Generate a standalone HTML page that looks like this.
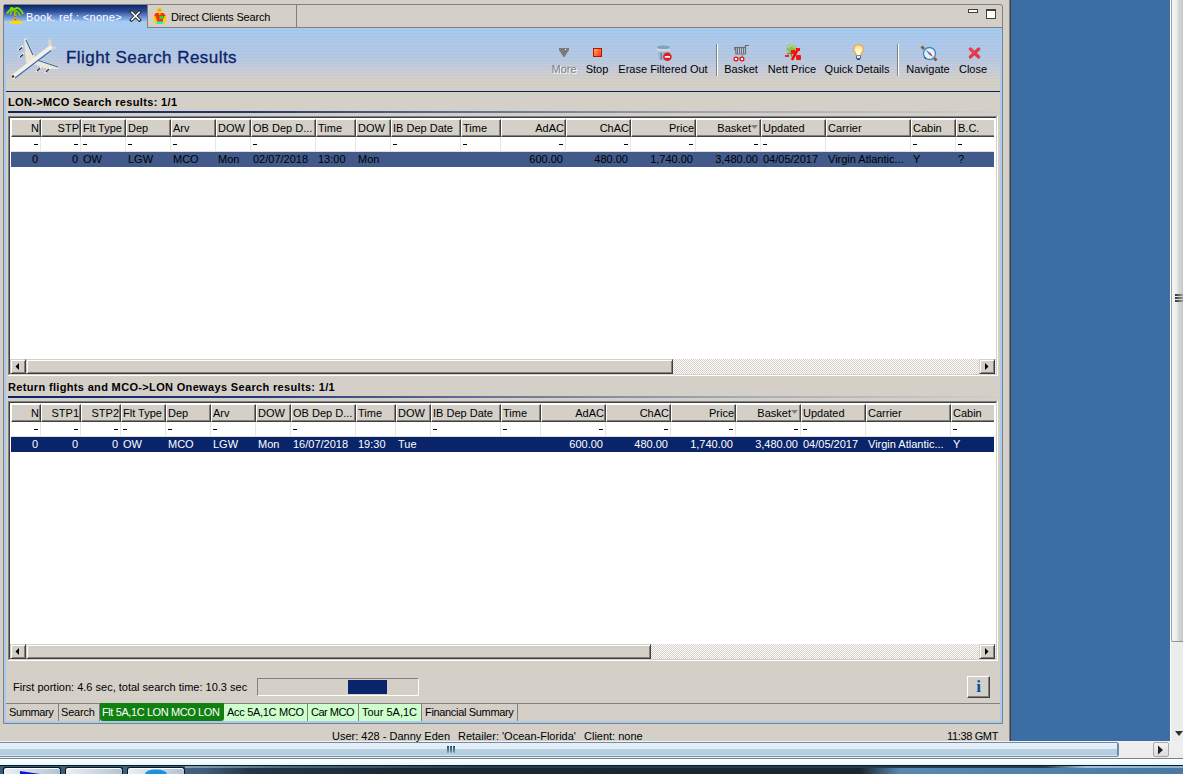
<!DOCTYPE html><html><head><meta charset="utf-8"><style>
html,body{margin:0;padding:0;}
body{width:1183px;height:774px;overflow:hidden;position:relative;background:#d4d0c8;font-family:"Liberation Sans",sans-serif;font-size:11px;color:#000;}
div{position:absolute;box-sizing:border-box;}
.t{white-space:nowrap;line-height:13px;height:13px;}
.r{text-align:right;}
svg{position:absolute;}
</style></head><body>
<div style="left:1009px;top:0px;width:1px;height:741px;background:#808080"></div>
<div style="left:1010px;top:0px;width:1px;height:741px;background:#404040"></div>
<div style="left:1011px;top:0px;width:159px;height:741px;background:#3a6ea5"></div>
<div style="left:1170px;top:0px;width:13px;height:741px;background:linear-gradient(to right,#ffffff 0,#ffffff 1px,#ececec 1px)"></div>
<div style="left:1171px;top:0px;width:12px;height:642px;background:linear-gradient(to right,#a0a0a0 0,#a0a0a0 1px,#f6f6f6 1px,#ececec 6px,#dadade 7px,#c8c8cc 12px);border-bottom:1px solid #909090;border-bottom-left-radius:2px"></div>
<div style="left:1175px;top:294px;width:8px;height:2px;background:linear-gradient(to right,#303030,#a0a0a0)"></div>
<div style="left:1175px;top:297px;width:8px;height:2px;background:linear-gradient(to right,#303030,#a0a0a0)"></div>
<div style="left:1175px;top:300px;width:8px;height:2px;background:linear-gradient(to right,#303030,#a0a0a0)"></div>
<svg style="left:1175px;top:729px" width="8" height="8"><path d="M0 2 L8 2 L4 7 Z" fill="#303030"/></svg>
<div style="left:0px;top:741px;width:1170px;height:18px;background:linear-gradient(#f2f2f2 0px,#f2f2f2 1px,#6a8cb0 1px,#6a8cb0 2px,#e6f0f6 2px,#e2ecf2 8px,#b8d2e4 8px,#b0cce0 14px,#dce6ea 14px,#dce6ea 15px,#6a8cb0 15px,#6a8cb0 16px,#f0f4f6 16px,#f0f4f6 17px,#808080 17px,#808080 18px)"></div>
<div style="left:1117px;top:741px;width:66px;height:18px;background:linear-gradient(#f0f0f0 0,#ececec 17px,#808080 17px)"></div>
<div style="left:1116px;top:742px;width:3px;height:15px;background:#6a8cb0;border-radius:0 3px 3px 0"></div>
<div style="left:1113px;top:743px;width:4px;height:13px;background:linear-gradient(#e6f0f6 0,#e2ecf2 6px,#b8d2e4 6px,#b0cce0 12px,#dce6ea 12px)"></div>
<div style="left:1153px;top:742px;width:16px;height:15px;background:linear-gradient(#f4f4f4,#dcdcdc);border:1px solid #a8a8a8;border-radius:2px"></div>
<svg style="left:1157px;top:745px" width="8" height="10"><path d="M1 0.5 L6 5 L1 9.5 Z" fill="#202020"/></svg>
<div style="left:447px;top:746px;width:2px;height:7px;background:linear-gradient(#2a4a60,#7aa0b8);border-radius:0 0 1px 1px"></div>
<div style="left:450px;top:746px;width:2px;height:7px;background:linear-gradient(#2a4a60,#7aa0b8);border-radius:0 0 1px 1px"></div>
<div style="left:453px;top:746px;width:2px;height:7px;background:linear-gradient(#2a4a60,#7aa0b8);border-radius:0 0 1px 1px"></div>
<div style="left:0px;top:759px;width:1183px;height:6px;background:linear-gradient(#ffffff,#e0faff)"></div>
<div style="left:0px;top:765px;width:1183px;height:9px;background:linear-gradient(to right,#3a5a78 0,#42607e 200px,#22364a 250px,#1a2834 400px,#1a2630 860px,#5a88b4 900px,#4a78a4 1183px)"></div>
<div style="left:0px;top:765px;width:1183px;height:1px;background:#101820"></div>
<div style="left:185px;top:766px;width:998px;height:2px;background:linear-gradient(to right,#8aa0b4,#50687c 100px,#2a3a48 300px,#2a3a48 860px,#a0c0dc 900px,#90b0cc)"></div>
<div style="left:3px;top:767px;width:58px;height:7px;background:linear-gradient(to right,#eaf0f6,#b0c4d6);border:1px solid #0c1620;border-bottom:none;border-radius:3px 3px 0 0;box-shadow:inset 0 1px 0 #fff"></div>
<div style="left:65px;top:767px;width:58px;height:7px;background:linear-gradient(to right,#eaf0f6,#b0c4d6);border:1px solid #0c1620;border-bottom:none;border-radius:3px 3px 0 0;box-shadow:inset 0 1px 0 #fff"></div>
<div style="left:127px;top:767px;width:58px;height:7px;background:linear-gradient(to right,#eaf0f6,#b0c4d6);border:1px solid #0c1620;border-bottom:none;border-radius:3px 3px 0 0;box-shadow:inset 0 1px 0 #fff"></div>
<svg style="left:20px;top:771px" width="20" height="3"><path d="M0 0 L20 3 L0 3 Z" fill="#1010e0"/></svg>
<svg style="left:145px;top:769px" width="22" height="5"><ellipse cx="11" cy="5" rx="11" ry="4.5" fill="#2090e0"/></svg>
<div style="left:3px;top:4px;width:1000px;height:720px;border:1px solid #808080;border-top-right-radius:3px;border-top-left-radius:2px;background:#d4d0c8"></div>
<div style="left:4px;top:21px;width:2px;height:702px;background:#a6caf0"></div>
<div style="left:1000px;top:28px;width:2px;height:695px;background:#a6caf0"></div>
<div style="left:4px;top:721px;width:998px;height:2px;background:#a6caf0"></div>
<div style="left:4px;top:5px;width:143px;height:23px;background:linear-gradient(#0a246a 0px,#2a4a94 6px,#6a90d4 12px,#98bef0 16px,#a6caf0 16px)"></div>
<div style="left:147px;top:5px;width:150px;height:23px;border-left:1px solid #808080;border-right:1px solid #808080;border-bottom:1px solid #808080;background:#d4d0c8"></div>
<div style="left:296px;top:27px;width:706px;height:1px;background:#808080"></div>
<div style="left:968px;top:9px;width:10px;height:4px;border:1px solid #404040;background:#fff"></div>
<div style="left:986px;top:9px;width:10px;height:10px;border:1px solid #404040;border-top-width:2px;background:#fff"></div>
<div class="t" style="left:26px;top:11px;color:#fff;letter-spacing:0.3px">Book. ref.: &lt;none&gt;</div>
<div class="t" style="left:171px;top:11px;letter-spacing:-0.2px">Direct Clients Search</div>
<svg style="left:129px;top:10px" width="13" height="12" viewBox="0 0 13 12"><path d="M2.5 2 L10.5 10 M10.5 2 L2.5 10" stroke="#303030" stroke-width="3.4" stroke-linecap="square"/><path d="M2.8 2.3 L10.2 9.7 M10.2 2.3 L2.8 9.7" stroke="#fff" stroke-width="1.5" stroke-linecap="square"/></svg>
<svg style="left:4px;top:5px" width="24" height="22" viewBox="0 0 24 22">
<path d="M5 17 L9 15.5 L15 15.5 L19 17 L19 18 L15 19 L9 19 L5 18 Z" fill="#ffd800"/>
<path d="M10.5 6 L11.5 11 L11.5 16" stroke="#e8a020" stroke-width="2" fill="none"/>
<path d="M11 11 L12 12 M11 14 L12 15" stroke="#a05010" stroke-width="1"/>
<path d="M10.5 4.5 C8 3 5 5 3 8.5" stroke="#80e000" stroke-width="1.8" fill="none"/>
<path d="M10.5 4.5 C9 5 6.5 7 6.5 10" stroke="#70d000" stroke-width="1.6" fill="none"/>
<path d="M10.5 4.5 C9 2.5 7.5 2.5 6 3.5" stroke="#80e000" stroke-width="1.6" fill="none"/>
<path d="M10.5 4.5 C12 2.5 14 2.5 16 4.5 C17.5 5.5 18.5 7 19 9" stroke="#80e000" stroke-width="1.8" fill="none"/>
<path d="M11 5 C13 6 15.5 8 16 11" stroke="#70d000" stroke-width="1.6" fill="none"/>
<path d="M11 5 C11.5 7 12 9 12 10" stroke="#60c000" stroke-width="1.4" fill="none"/>
</svg>
<svg style="left:148px;top:5px" width="24" height="22" viewBox="0 0 24 22">
<ellipse cx="11.5" cy="5" rx="2.6" ry="2.2" fill="#f8c000"/>
<rect x="10.5" y="4.5" width="2" height="1" fill="#ff7000"/>
<path d="M7.5 8 L15.5 8 L18 11 L18 13 L15 14 L15 19 L8.5 19 L8.5 14 L6 13 L6 11 Z" fill="#ff3000"/>
<rect x="11.5" y="11" width="4" height="3" fill="#20e020"/>
<rect x="9" y="16.5" width="6" height="2.5" fill="#10f0f0"/>
<path d="M6.5 12 L8 17.5 M17.5 12 L16 17.5" stroke="#ffd000" stroke-width="2.4" stroke-linecap="round"/>
<rect x="11" y="8" width="1.5" height="2" fill="#ffd000"/>
</svg>
<div style="left:6px;top:28px;width:994px;height:63px;background:linear-gradient(#a6caf0 0px,#b4c8e4 28px,#c8ccd8 42px,#d4d0c8 52px,#d4d0c8 63px)"></div>
<div style="left:6px;top:28px;width:994px;height:63px;background:repeating-linear-gradient(rgba(255,255,255,0) 0px,rgba(255,255,255,0) 2px,rgba(0,0,0,0.025) 2px,rgba(0,0,0,0.025) 3px)"></div>
<div style="left:6px;top:91px;width:994px;height:1px;background:#0a246a"></div>
<div class="t" style="left:66px;top:48px;font-size:17px;line-height:20px;height:20px;color:#0a246a;letter-spacing:0.45px;-webkit-text-stroke:0.3px #0a246a">Flight Search Results</div>
<div class="t" style="left:504px;top:63px;width:120px;text-align:center;color:#808080;text-shadow:1px 1px 0 #fff">More</div>
<div class="t" style="left:537px;top:63px;width:120px;text-align:center;">Stop</div>
<div class="t" style="left:603px;top:63px;width:120px;text-align:center;">Erase Filtered Out</div>
<div class="t" style="left:681px;top:63px;width:120px;text-align:center;">Basket</div>
<div class="t" style="left:732px;top:63px;width:120px;text-align:center;">Nett Price</div>
<div class="t" style="left:797px;top:63px;width:120px;text-align:center;">Quick Details</div>
<div class="t" style="left:868px;top:63px;width:120px;text-align:center;">Navigate</div>
<div class="t" style="left:913px;top:63px;width:120px;text-align:center;">Close</div>
<div style="left:716px;top:44px;width:1px;height:32px;background:#808080"></div>
<div style="left:717px;top:44px;width:1px;height:32px;background:#ffffff"></div>
<div style="left:897px;top:44px;width:1px;height:32px;background:#808080"></div>
<div style="left:898px;top:44px;width:1px;height:32px;background:#ffffff"></div>
<svg style="left:559px;top:48px" width="11" height="9"><path d="M0 0 L10 0 L10 2 L5.5 9 L4.5 9 L0 2 Z" fill="#7a7a7a"/><rect x="6" y="1" width="1" height="1" fill="#fff"/></svg>
<svg style="left:593px;top:48px" width="9" height="9"><defs><linearGradient id="gs" x1="0" y1="0" x2="1" y2="1"><stop offset="0" stop-color="#ffb070"/><stop offset="1" stop-color="#ff3000"/></linearGradient></defs><rect x="0.5" y="0.5" width="8" height="8" fill="url(#gs)" stroke="#c01000"/></svg>
<svg style="left:656px;top:45px" width="17" height="17" viewBox="0 0 17 17">
<path d="M1 2.5 L14 2.5 L13.5 8 L13 15 L3 15 L2 8 Z" fill="#9cb8cc"/>
<rect x="1" y="3.5" width="13" height="3" fill="#c8d8e4"/>
<ellipse cx="7.5" cy="2.3" rx="6.5" ry="1.8" fill="#7ea4c0"/>
<rect x="4.5" y="8" width="1.5" height="6.5" fill="#5a88ac"/>
<circle cx="11.4" cy="11.8" r="4.3" fill="#e02020"/>
<rect x="8.8" y="11" width="5.2" height="1.7" fill="#fff"/>
</svg>
<svg style="left:728px;top:40px" width="24" height="24" viewBox="0 0 24 24">
<path d="M6 7.5 L17 7.5" stroke="#6e6e6e" stroke-width="1.2"/>
<path d="M17.5 14 L17.5 5.5 L21 5.5" stroke="#6e6e6e" stroke-width="1.2" fill="none"/>
<path d="M7.5 7 L8 14 L17.5 14" stroke="#6e6e6e" stroke-width="1.2" fill="none"/>
<path d="M9.5 8 L9.5 13.5 M11.5 8 L11.5 13.5 M13.5 8 L13.5 13.5 M15.5 8 L15.5 13.5" stroke="#6e6e6e" stroke-width="1"/>
<path d="M6.5 8.5 L6.5 10" stroke="#6e6e6e" stroke-width="1"/>
<path d="M15 14 L14 17 L9 18.5" stroke="#50a0a0" stroke-width="1" fill="none"/>
<circle cx="8" cy="19" r="1.9" fill="#fff" stroke="#ff0000" stroke-width="1.2"/>
<circle cx="14" cy="19" r="1.9" fill="#fff" stroke="#ff0000" stroke-width="1.2"/>
</svg>
<svg style="left:784px;top:44px" width="18" height="17" viewBox="0 0 18 17">
<ellipse cx="7.5" cy="4.5" rx="5" ry="4" fill="#8cc050"/>
<path d="M4 4 C5 1 10 1 11 4" stroke="#c8e0a0" stroke-width="1.2" fill="none"/>
<path d="M3 10 L7 9 L8 13" stroke="#60a030" stroke-width="1.6" fill="none"/>
<rect x="1" y="11" width="4" height="2" fill="#ff2020"/>
<path d="M8 16 L14 5" stroke="#ff0000" stroke-width="2.6"/>
<rect x="7" y="6" width="4" height="4" fill="#ff1010"/>
<rect x="12" y="11" width="5" height="5" rx="1" fill="#ff1010"/>
<rect x="12" y="4" width="4" height="3" fill="#ff1010"/>
</svg>
<svg style="left:852px;top:44px" width="13" height="17" viewBox="0 0 13 17">
<defs><radialGradient id="gb" cx="0.5" cy="0.75" r="0.7"><stop offset="0" stop-color="#ffffff"/><stop offset="0.5" stop-color="#fff4c8"/><stop offset="1" stop-color="#ffd890"/></radialGradient></defs>
<path d="M6.5 0.8 C9.5 0.8 11.2 3 11.2 5.5 C11.2 7.5 9.8 8.5 9 10 L9 11.5 L4 11.5 L4 10 C3.2 8.5 1.8 7.5 1.8 5.5 C1.8 3 3.5 0.8 6.5 0.8 Z" fill="url(#gb)" stroke="#f4a820" stroke-width="1.1"/>
<rect x="4" y="11.5" width="5" height="3.5" fill="#4a6a98"/>
<rect x="5" y="12" width="3" height="2" fill="#e8eef4"/>
<rect x="5" y="15" width="3" height="1" fill="#3a4a68"/>
</svg>
<svg style="left:920px;top:44px" width="18" height="18" viewBox="0 0 18 18">
<path d="M1.5 2.5 L4 5 M14 14 L16.5 16.5" stroke="#8a5a20" stroke-width="2.6"/>
<circle cx="9.5" cy="9.5" r="6" fill="#e8f0f8" stroke="#3a8cc8" stroke-width="1.4"/>
<path d="M5.5 5.5 L10.5 9 L9 10.5 Z" fill="#2a88e0"/>
<path d="M10.5 9 L13 13 L9 10.5 Z" fill="#ff1818"/>
<path d="M4 13 L6 15" stroke="#303848" stroke-width="1"/>
</svg>
<svg style="left:967px;top:46px" width="15" height="14" viewBox="0 0 15 14">
<path d="M3.3 3 L11.7 11 M11.7 3 L3.3 11" stroke="#e43848" stroke-width="3.2" stroke-linecap="round"/>
<path d="M3.5 3.3 L7.5 7" stroke="#ff7080" stroke-width="1" opacity="0.6"/>
</svg>
<svg style="left:10px;top:36px" width="52" height="44" viewBox="0 0 52 44">
<path d="M14 3 L16 2 L24 18 L25 23 L16 27 Z" fill="#ece6d6"/>
<path d="M16 4 L23 19" stroke="#3a6ab0" stroke-width="1.2"/>
<path d="M20 27 L27 23 L48 30 L49 33 L38 33 Z" fill="#ece6d6"/>
<path d="M27 24 L48 31" stroke="#3a6ab0" stroke-width="1.3"/>
<path d="M38 4 L41 3 L42 10 L46 11 L47 13 L39 12 Z" fill="#ddd6c4"/>
<path d="M3.5 40.5 L40 12" stroke="#f4f0e6" stroke-width="4.5" stroke-linecap="round"/>
<path d="M5 42 L41 14.5" stroke="#3a6ab0" stroke-width="1.1"/>
<path d="M2 41 L4 40" stroke="#303030" stroke-width="2"/>
<path d="M8 14 L13 10 M9 21 L14 17 M26 36 L31 31 M35 37 L40 32" stroke="#ffffff" stroke-width="1.6"/>
<path d="M9 14 L12 11.5 M10 21 L13 18.5 M27 35 L30 32 M36 36 L39 33" stroke="#303030" stroke-width="1.3"/>
</svg>
<div class="t" style="left:8px;top:96px;font-weight:bold;letter-spacing:0.34px">LON-&gt;MCO Search results: 1/1</div>
<div style="left:8px;top:111px;width:992px;height:2px;background:linear-gradient(to right,#0a246a 0,#203a78 25%,#6a7898 50%,#a8acb8 75%,#d0cec8 100%)"></div>
<div class="t" style="left:8px;top:381px;font-weight:bold;letter-spacing:0.34px">Return flights and MCO-&gt;LON Oneways Search results: 1/1</div>
<div style="left:8px;top:396px;width:992px;height:2px;background:linear-gradient(to right,#0a246a 0,#203a78 25%,#6a7898 50%,#a8acb8 75%,#d0cec8 100%)"></div>
<div style="left:8px;top:116px;width:990px;height:1px;background:#808080"></div>
<div style="left:8px;top:116px;width:1px;height:260px;background:#808080"></div>
<div style="left:9px;top:117px;width:988px;height:1px;background:#404040"></div>
<div style="left:9px;top:117px;width:1px;height:258px;background:#404040"></div>
<div style="left:997px;top:116px;width:1px;height:260px;background:#ffffff"></div>
<div style="left:8px;top:375px;width:990px;height:1px;background:#ffffff"></div>
<div style="left:996px;top:117px;width:1px;height:258px;background:#d4d0c8"></div>
<div style="left:9px;top:374px;width:988px;height:1px;background:#d4d0c8"></div>
<div style="left:10px;top:118px;width:986px;height:256px;background:#ffffff"></div>
<div style="left:11px;top:119px;width:983px;height:48px;overflow:hidden">
<div style="left:0px;top:0px;width:30px;height:18px;background:#d4d0c8;border-top:1px solid #fff;border-left:1px solid #fff;border-right:1px solid #404040;border-bottom:1px solid #404040;box-shadow:inset -1px -1px 0 #808080"></div>
<div class="t" style="left:0px;top:3px;width:30px;height:13px;overflow:hidden"><div class="t" style="top:0;right:2px;text-align:right">N</div></div>
<div style="left:29px;top:18px;width:1px;height:15px;background:#e8e6e0"></div>
<div style="left:23px;top:25px;width:4px;height:1px;background:#000"></div>
<div style="left:30px;top:0px;width:40px;height:18px;background:#d4d0c8;border-top:1px solid #fff;border-left:1px solid #fff;border-right:1px solid #404040;border-bottom:1px solid #404040;box-shadow:inset -1px -1px 0 #808080"></div>
<div class="t" style="left:30px;top:3px;width:40px;height:13px;overflow:hidden"><div class="t" style="top:0;right:2px;text-align:right">STP</div></div>
<div style="left:69px;top:18px;width:1px;height:15px;background:#e8e6e0"></div>
<div style="left:63px;top:25px;width:4px;height:1px;background:#000"></div>
<div style="left:70px;top:0px;width:45px;height:18px;background:#d4d0c8;border-top:1px solid #fff;border-left:1px solid #fff;border-right:1px solid #404040;border-bottom:1px solid #404040;box-shadow:inset -1px -1px 0 #808080"></div>
<div class="t" style="left:70px;top:3px;width:45px;height:13px;overflow:hidden"><div class="t" style="top:0;left:2px">Flt Type</div></div>
<div style="left:114px;top:18px;width:1px;height:15px;background:#e8e6e0"></div>
<div style="left:72px;top:25px;width:4px;height:1px;background:#000"></div>
<div style="left:115px;top:0px;width:45px;height:18px;background:#d4d0c8;border-top:1px solid #fff;border-left:1px solid #fff;border-right:1px solid #404040;border-bottom:1px solid #404040;box-shadow:inset -1px -1px 0 #808080"></div>
<div class="t" style="left:115px;top:3px;width:45px;height:13px;overflow:hidden"><div class="t" style="top:0;left:2px">Dep</div></div>
<div style="left:159px;top:18px;width:1px;height:15px;background:#e8e6e0"></div>
<div style="left:117px;top:25px;width:4px;height:1px;background:#000"></div>
<div style="left:160px;top:0px;width:45px;height:18px;background:#d4d0c8;border-top:1px solid #fff;border-left:1px solid #fff;border-right:1px solid #404040;border-bottom:1px solid #404040;box-shadow:inset -1px -1px 0 #808080"></div>
<div class="t" style="left:160px;top:3px;width:45px;height:13px;overflow:hidden"><div class="t" style="top:0;left:2px">Arv</div></div>
<div style="left:204px;top:18px;width:1px;height:15px;background:#e8e6e0"></div>
<div style="left:162px;top:25px;width:4px;height:1px;background:#000"></div>
<div style="left:205px;top:0px;width:35px;height:18px;background:#d4d0c8;border-top:1px solid #fff;border-left:1px solid #fff;border-right:1px solid #404040;border-bottom:1px solid #404040;box-shadow:inset -1px -1px 0 #808080"></div>
<div class="t" style="left:205px;top:3px;width:35px;height:13px;overflow:hidden"><div class="t" style="top:0;left:2px">DOW</div></div>
<div style="left:239px;top:18px;width:1px;height:15px;background:#e8e6e0"></div>
<div style="left:240px;top:0px;width:65px;height:18px;background:#d4d0c8;border-top:1px solid #fff;border-left:1px solid #fff;border-right:1px solid #404040;border-bottom:1px solid #404040;box-shadow:inset -1px -1px 0 #808080"></div>
<div class="t" style="left:240px;top:3px;width:65px;height:13px;overflow:hidden"><div class="t" style="top:0;left:2px">OB Dep D...</div></div>
<div style="left:304px;top:18px;width:1px;height:15px;background:#e8e6e0"></div>
<div style="left:242px;top:25px;width:4px;height:1px;background:#000"></div>
<div style="left:305px;top:0px;width:40px;height:18px;background:#d4d0c8;border-top:1px solid #fff;border-left:1px solid #fff;border-right:1px solid #404040;border-bottom:1px solid #404040;box-shadow:inset -1px -1px 0 #808080"></div>
<div class="t" style="left:305px;top:3px;width:40px;height:13px;overflow:hidden"><div class="t" style="top:0;left:2px">Time</div></div>
<div style="left:344px;top:18px;width:1px;height:15px;background:#e8e6e0"></div>
<div style="left:345px;top:0px;width:35px;height:18px;background:#d4d0c8;border-top:1px solid #fff;border-left:1px solid #fff;border-right:1px solid #404040;border-bottom:1px solid #404040;box-shadow:inset -1px -1px 0 #808080"></div>
<div class="t" style="left:345px;top:3px;width:35px;height:13px;overflow:hidden"><div class="t" style="top:0;left:2px">DOW</div></div>
<div style="left:379px;top:18px;width:1px;height:15px;background:#e8e6e0"></div>
<div style="left:380px;top:0px;width:70px;height:18px;background:#d4d0c8;border-top:1px solid #fff;border-left:1px solid #fff;border-right:1px solid #404040;border-bottom:1px solid #404040;box-shadow:inset -1px -1px 0 #808080"></div>
<div class="t" style="left:380px;top:3px;width:70px;height:13px;overflow:hidden"><div class="t" style="top:0;left:2px">IB Dep Date</div></div>
<div style="left:449px;top:18px;width:1px;height:15px;background:#e8e6e0"></div>
<div style="left:382px;top:25px;width:4px;height:1px;background:#000"></div>
<div style="left:450px;top:0px;width:40px;height:18px;background:#d4d0c8;border-top:1px solid #fff;border-left:1px solid #fff;border-right:1px solid #404040;border-bottom:1px solid #404040;box-shadow:inset -1px -1px 0 #808080"></div>
<div class="t" style="left:450px;top:3px;width:40px;height:13px;overflow:hidden"><div class="t" style="top:0;left:2px">Time</div></div>
<div style="left:489px;top:18px;width:1px;height:15px;background:#e8e6e0"></div>
<div style="left:452px;top:25px;width:4px;height:1px;background:#000"></div>
<div style="left:490px;top:0px;width:65px;height:18px;background:#d4d0c8;border-top:1px solid #fff;border-left:1px solid #fff;border-right:1px solid #404040;border-bottom:1px solid #404040;box-shadow:inset -1px -1px 0 #808080"></div>
<div class="t" style="left:490px;top:3px;width:65px;height:13px;overflow:hidden"><div class="t" style="top:0;right:2px;text-align:right">AdAC</div></div>
<div style="left:554px;top:18px;width:1px;height:15px;background:#e8e6e0"></div>
<div style="left:548px;top:25px;width:4px;height:1px;background:#000"></div>
<div style="left:555px;top:0px;width:65px;height:18px;background:#d4d0c8;border-top:1px solid #fff;border-left:1px solid #fff;border-right:1px solid #404040;border-bottom:1px solid #404040;box-shadow:inset -1px -1px 0 #808080"></div>
<div class="t" style="left:555px;top:3px;width:65px;height:13px;overflow:hidden"><div class="t" style="top:0;right:2px;text-align:right">ChAC</div></div>
<div style="left:619px;top:18px;width:1px;height:15px;background:#e8e6e0"></div>
<div style="left:613px;top:25px;width:4px;height:1px;background:#000"></div>
<div style="left:620px;top:0px;width:65px;height:18px;background:#d4d0c8;border-top:1px solid #fff;border-left:1px solid #fff;border-right:1px solid #404040;border-bottom:1px solid #404040;box-shadow:inset -1px -1px 0 #808080"></div>
<div class="t" style="left:620px;top:3px;width:65px;height:13px;overflow:hidden"><div class="t" style="top:0;right:2px;text-align:right">Price</div></div>
<div style="left:684px;top:18px;width:1px;height:15px;background:#e8e6e0"></div>
<div style="left:678px;top:25px;width:4px;height:1px;background:#000"></div>
<div style="left:685px;top:0px;width:65px;height:18px;background:#d4d0c8;border-top:1px solid #fff;border-left:1px solid #fff;border-right:1px solid #404040;border-bottom:1px solid #404040;box-shadow:inset -1px -1px 0 #808080"></div>
<div class="t" style="left:685px;top:3px;width:65px;height:13px;overflow:hidden"><div class="t" style="top:0;right:10px;text-align:right">Basket</div></div>
<div style="left:749px;top:18px;width:1px;height:15px;background:#e8e6e0"></div>
<div style="left:743px;top:25px;width:4px;height:1px;background:#000"></div>
<div style="left:750px;top:0px;width:65px;height:18px;background:#d4d0c8;border-top:1px solid #fff;border-left:1px solid #fff;border-right:1px solid #404040;border-bottom:1px solid #404040;box-shadow:inset -1px -1px 0 #808080"></div>
<div class="t" style="left:750px;top:3px;width:65px;height:13px;overflow:hidden"><div class="t" style="top:0;left:2px">Updated</div></div>
<div style="left:814px;top:18px;width:1px;height:15px;background:#e8e6e0"></div>
<div style="left:752px;top:25px;width:4px;height:1px;background:#000"></div>
<div style="left:815px;top:0px;width:85px;height:18px;background:#d4d0c8;border-top:1px solid #fff;border-left:1px solid #fff;border-right:1px solid #404040;border-bottom:1px solid #404040;box-shadow:inset -1px -1px 0 #808080"></div>
<div class="t" style="left:815px;top:3px;width:85px;height:13px;overflow:hidden"><div class="t" style="top:0;left:2px">Carrier</div></div>
<div style="left:899px;top:18px;width:1px;height:15px;background:#e8e6e0"></div>
<div style="left:900px;top:0px;width:45px;height:18px;background:#d4d0c8;border-top:1px solid #fff;border-left:1px solid #fff;border-right:1px solid #404040;border-bottom:1px solid #404040;box-shadow:inset -1px -1px 0 #808080"></div>
<div class="t" style="left:900px;top:3px;width:45px;height:13px;overflow:hidden"><div class="t" style="top:0;left:2px">Cabin</div></div>
<div style="left:944px;top:18px;width:1px;height:15px;background:#e8e6e0"></div>
<div style="left:902px;top:25px;width:4px;height:1px;background:#000"></div>
<div style="left:945px;top:0px;width:40px;height:18px;background:#d4d0c8;border-top:1px solid #fff;border-left:1px solid #fff;border-right:1px solid #404040;border-bottom:1px solid #404040;box-shadow:inset -1px -1px 0 #808080"></div>
<div class="t" style="left:945px;top:3px;width:40px;height:13px;overflow:hidden"><div class="t" style="top:0;left:2px">B.C.</div></div>
<div style="left:984px;top:18px;width:1px;height:15px;background:#e8e6e0"></div>
<div style="left:947px;top:25px;width:4px;height:1px;background:#000"></div>
<div style="left:0px;top:32px;width:983px;height:1px;background:#e2dfd6"></div>
<div style="left:0px;top:33px;width:983px;height:15px;background:#425a8a"></div>
<div class="t" style="left:0px;top:34px;width:30px;height:13px;overflow:hidden;color:#000"><div class="t" style="top:0;right:3px;text-align:right">0</div></div>
<div class="t" style="left:30px;top:34px;width:40px;height:13px;overflow:hidden;color:#000"><div class="t" style="top:0;right:3px;text-align:right">0</div></div>
<div class="t" style="left:70px;top:34px;width:45px;height:13px;overflow:hidden;color:#000"><div class="t" style="top:0;left:2px">OW</div></div>
<div class="t" style="left:115px;top:34px;width:45px;height:13px;overflow:hidden;color:#000"><div class="t" style="top:0;left:2px">LGW</div></div>
<div class="t" style="left:160px;top:34px;width:45px;height:13px;overflow:hidden;color:#000"><div class="t" style="top:0;left:2px">MCO</div></div>
<div class="t" style="left:205px;top:34px;width:35px;height:13px;overflow:hidden;color:#000"><div class="t" style="top:0;left:2px">Mon</div></div>
<div class="t" style="left:240px;top:34px;width:65px;height:13px;overflow:hidden;color:#000"><div class="t" style="top:0;left:2px">02/07/2018</div></div>
<div class="t" style="left:305px;top:34px;width:40px;height:13px;overflow:hidden;color:#000"><div class="t" style="top:0;left:2px">13:00</div></div>
<div class="t" style="left:345px;top:34px;width:35px;height:13px;overflow:hidden;color:#000"><div class="t" style="top:0;left:2px">Mon</div></div>
<div class="t" style="left:490px;top:34px;width:65px;height:13px;overflow:hidden;color:#000"><div class="t" style="top:0;right:3px;text-align:right">600.00</div></div>
<div class="t" style="left:555px;top:34px;width:65px;height:13px;overflow:hidden;color:#000"><div class="t" style="top:0;right:3px;text-align:right">480.00</div></div>
<div class="t" style="left:620px;top:34px;width:65px;height:13px;overflow:hidden;color:#000"><div class="t" style="top:0;right:3px;text-align:right">1,740.00</div></div>
<div class="t" style="left:685px;top:34px;width:65px;height:13px;overflow:hidden;color:#000"><div class="t" style="top:0;right:3px;text-align:right">3,480.00</div></div>
<div class="t" style="left:750px;top:34px;width:65px;height:13px;overflow:hidden;color:#000"><div class="t" style="top:0;left:2px">04/05/2017</div></div>
<div class="t" style="left:815px;top:34px;width:85px;height:13px;overflow:hidden;color:#000"><div class="t" style="top:0;left:2px">Virgin Atlantic...</div></div>
<div class="t" style="left:900px;top:34px;width:45px;height:13px;overflow:hidden;color:#000"><div class="t" style="top:0;left:2px">Y</div></div>
<div class="t" style="left:945px;top:34px;width:40px;height:13px;overflow:hidden;color:#000"><div class="t" style="top:0;left:2px">?</div></div>
</div>
<div style="left:10px;top:359px;width:986px;height:15px;background-color:#ffffff;background-image:linear-gradient(45deg,#d4d0c8 25%,transparent 25%,transparent 75%,#d4d0c8 75%),linear-gradient(45deg,#d4d0c8 25%,transparent 25%,transparent 75%,#d4d0c8 75%);background-size:2px 2px;background-position:0 0,1px 1px"></div>
<div style="left:10px;top:359px;width:16px;height:15px;background:#d4d0c8;border-top:1px solid #d4d0c8;border-left:1px solid #d4d0c8;border-right:1px solid #404040;border-bottom:1px solid #404040;box-shadow:inset 1px 1px 0 #fff,inset -1px -1px 0 #808080"></div>
<svg style="left:15px;top:363px" width="5" height="8"><path d="M4 0 L4 7 L0.5 3.5 Z" fill="#000"/></svg>
<div style="left:26px;top:359px;width:647px;height:15px;background:#d4d0c8;border-top:1px solid #d4d0c8;border-left:1px solid #d4d0c8;border-right:1px solid #404040;border-bottom:1px solid #404040;box-shadow:inset 1px 1px 0 #fff,inset -1px -1px 0 #808080"></div>
<div style="left:979px;top:359px;width:16px;height:15px;background:#d4d0c8;border-top:1px solid #d4d0c8;border-left:1px solid #d4d0c8;border-right:1px solid #404040;border-bottom:1px solid #404040;box-shadow:inset 1px 1px 0 #fff,inset -1px -1px 0 #808080"></div>
<svg style="left:985px;top:363px" width="5" height="8"><path d="M0 0 L0 7 L3.5 3.5 Z" fill="#000"/></svg>
<div style="left:8px;top:401px;width:990px;height:1px;background:#808080"></div>
<div style="left:8px;top:401px;width:1px;height:260px;background:#808080"></div>
<div style="left:9px;top:402px;width:988px;height:1px;background:#404040"></div>
<div style="left:9px;top:402px;width:1px;height:258px;background:#404040"></div>
<div style="left:997px;top:401px;width:1px;height:260px;background:#ffffff"></div>
<div style="left:8px;top:660px;width:990px;height:1px;background:#ffffff"></div>
<div style="left:996px;top:402px;width:1px;height:258px;background:#d4d0c8"></div>
<div style="left:9px;top:659px;width:988px;height:1px;background:#d4d0c8"></div>
<div style="left:10px;top:403px;width:986px;height:256px;background:#ffffff"></div>
<div style="left:11px;top:404px;width:983px;height:48px;overflow:hidden">
<div style="left:0px;top:0px;width:30px;height:18px;background:#d4d0c8;border-top:1px solid #fff;border-left:1px solid #fff;border-right:1px solid #404040;border-bottom:1px solid #404040;box-shadow:inset -1px -1px 0 #808080"></div>
<div class="t" style="left:0px;top:3px;width:30px;height:13px;overflow:hidden"><div class="t" style="top:0;right:2px;text-align:right">N</div></div>
<div style="left:29px;top:18px;width:1px;height:15px;background:#e8e6e0"></div>
<div style="left:23px;top:25px;width:4px;height:1px;background:#000"></div>
<div style="left:30px;top:0px;width:40px;height:18px;background:#d4d0c8;border-top:1px solid #fff;border-left:1px solid #fff;border-right:1px solid #404040;border-bottom:1px solid #404040;box-shadow:inset -1px -1px 0 #808080"></div>
<div class="t" style="left:30px;top:3px;width:40px;height:13px;overflow:hidden"><div class="t" style="top:0;right:2px;text-align:right">STP1</div></div>
<div style="left:69px;top:18px;width:1px;height:15px;background:#e8e6e0"></div>
<div style="left:63px;top:25px;width:4px;height:1px;background:#000"></div>
<div style="left:70px;top:0px;width:40px;height:18px;background:#d4d0c8;border-top:1px solid #fff;border-left:1px solid #fff;border-right:1px solid #404040;border-bottom:1px solid #404040;box-shadow:inset -1px -1px 0 #808080"></div>
<div class="t" style="left:70px;top:3px;width:40px;height:13px;overflow:hidden"><div class="t" style="top:0;right:2px;text-align:right">STP2</div></div>
<div style="left:109px;top:18px;width:1px;height:15px;background:#e8e6e0"></div>
<div style="left:103px;top:25px;width:4px;height:1px;background:#000"></div>
<div style="left:110px;top:0px;width:45px;height:18px;background:#d4d0c8;border-top:1px solid #fff;border-left:1px solid #fff;border-right:1px solid #404040;border-bottom:1px solid #404040;box-shadow:inset -1px -1px 0 #808080"></div>
<div class="t" style="left:110px;top:3px;width:45px;height:13px;overflow:hidden"><div class="t" style="top:0;left:2px">Flt Type</div></div>
<div style="left:154px;top:18px;width:1px;height:15px;background:#e8e6e0"></div>
<div style="left:112px;top:25px;width:4px;height:1px;background:#000"></div>
<div style="left:155px;top:0px;width:45px;height:18px;background:#d4d0c8;border-top:1px solid #fff;border-left:1px solid #fff;border-right:1px solid #404040;border-bottom:1px solid #404040;box-shadow:inset -1px -1px 0 #808080"></div>
<div class="t" style="left:155px;top:3px;width:45px;height:13px;overflow:hidden"><div class="t" style="top:0;left:2px">Dep</div></div>
<div style="left:199px;top:18px;width:1px;height:15px;background:#e8e6e0"></div>
<div style="left:157px;top:25px;width:4px;height:1px;background:#000"></div>
<div style="left:200px;top:0px;width:45px;height:18px;background:#d4d0c8;border-top:1px solid #fff;border-left:1px solid #fff;border-right:1px solid #404040;border-bottom:1px solid #404040;box-shadow:inset -1px -1px 0 #808080"></div>
<div class="t" style="left:200px;top:3px;width:45px;height:13px;overflow:hidden"><div class="t" style="top:0;left:2px">Arv</div></div>
<div style="left:244px;top:18px;width:1px;height:15px;background:#e8e6e0"></div>
<div style="left:202px;top:25px;width:4px;height:1px;background:#000"></div>
<div style="left:245px;top:0px;width:35px;height:18px;background:#d4d0c8;border-top:1px solid #fff;border-left:1px solid #fff;border-right:1px solid #404040;border-bottom:1px solid #404040;box-shadow:inset -1px -1px 0 #808080"></div>
<div class="t" style="left:245px;top:3px;width:35px;height:13px;overflow:hidden"><div class="t" style="top:0;left:2px">DOW</div></div>
<div style="left:279px;top:18px;width:1px;height:15px;background:#e8e6e0"></div>
<div style="left:280px;top:0px;width:65px;height:18px;background:#d4d0c8;border-top:1px solid #fff;border-left:1px solid #fff;border-right:1px solid #404040;border-bottom:1px solid #404040;box-shadow:inset -1px -1px 0 #808080"></div>
<div class="t" style="left:280px;top:3px;width:65px;height:13px;overflow:hidden"><div class="t" style="top:0;left:2px">OB Dep D...</div></div>
<div style="left:344px;top:18px;width:1px;height:15px;background:#e8e6e0"></div>
<div style="left:282px;top:25px;width:4px;height:1px;background:#000"></div>
<div style="left:345px;top:0px;width:40px;height:18px;background:#d4d0c8;border-top:1px solid #fff;border-left:1px solid #fff;border-right:1px solid #404040;border-bottom:1px solid #404040;box-shadow:inset -1px -1px 0 #808080"></div>
<div class="t" style="left:345px;top:3px;width:40px;height:13px;overflow:hidden"><div class="t" style="top:0;left:2px">Time</div></div>
<div style="left:384px;top:18px;width:1px;height:15px;background:#e8e6e0"></div>
<div style="left:385px;top:0px;width:35px;height:18px;background:#d4d0c8;border-top:1px solid #fff;border-left:1px solid #fff;border-right:1px solid #404040;border-bottom:1px solid #404040;box-shadow:inset -1px -1px 0 #808080"></div>
<div class="t" style="left:385px;top:3px;width:35px;height:13px;overflow:hidden"><div class="t" style="top:0;left:2px">DOW</div></div>
<div style="left:419px;top:18px;width:1px;height:15px;background:#e8e6e0"></div>
<div style="left:420px;top:0px;width:70px;height:18px;background:#d4d0c8;border-top:1px solid #fff;border-left:1px solid #fff;border-right:1px solid #404040;border-bottom:1px solid #404040;box-shadow:inset -1px -1px 0 #808080"></div>
<div class="t" style="left:420px;top:3px;width:70px;height:13px;overflow:hidden"><div class="t" style="top:0;left:2px">IB Dep Date</div></div>
<div style="left:489px;top:18px;width:1px;height:15px;background:#e8e6e0"></div>
<div style="left:422px;top:25px;width:4px;height:1px;background:#000"></div>
<div style="left:490px;top:0px;width:40px;height:18px;background:#d4d0c8;border-top:1px solid #fff;border-left:1px solid #fff;border-right:1px solid #404040;border-bottom:1px solid #404040;box-shadow:inset -1px -1px 0 #808080"></div>
<div class="t" style="left:490px;top:3px;width:40px;height:13px;overflow:hidden"><div class="t" style="top:0;left:2px">Time</div></div>
<div style="left:529px;top:18px;width:1px;height:15px;background:#e8e6e0"></div>
<div style="left:492px;top:25px;width:4px;height:1px;background:#000"></div>
<div style="left:530px;top:0px;width:65px;height:18px;background:#d4d0c8;border-top:1px solid #fff;border-left:1px solid #fff;border-right:1px solid #404040;border-bottom:1px solid #404040;box-shadow:inset -1px -1px 0 #808080"></div>
<div class="t" style="left:530px;top:3px;width:65px;height:13px;overflow:hidden"><div class="t" style="top:0;right:2px;text-align:right">AdAC</div></div>
<div style="left:594px;top:18px;width:1px;height:15px;background:#e8e6e0"></div>
<div style="left:588px;top:25px;width:4px;height:1px;background:#000"></div>
<div style="left:595px;top:0px;width:65px;height:18px;background:#d4d0c8;border-top:1px solid #fff;border-left:1px solid #fff;border-right:1px solid #404040;border-bottom:1px solid #404040;box-shadow:inset -1px -1px 0 #808080"></div>
<div class="t" style="left:595px;top:3px;width:65px;height:13px;overflow:hidden"><div class="t" style="top:0;right:2px;text-align:right">ChAC</div></div>
<div style="left:659px;top:18px;width:1px;height:15px;background:#e8e6e0"></div>
<div style="left:653px;top:25px;width:4px;height:1px;background:#000"></div>
<div style="left:660px;top:0px;width:65px;height:18px;background:#d4d0c8;border-top:1px solid #fff;border-left:1px solid #fff;border-right:1px solid #404040;border-bottom:1px solid #404040;box-shadow:inset -1px -1px 0 #808080"></div>
<div class="t" style="left:660px;top:3px;width:65px;height:13px;overflow:hidden"><div class="t" style="top:0;right:2px;text-align:right">Price</div></div>
<div style="left:724px;top:18px;width:1px;height:15px;background:#e8e6e0"></div>
<div style="left:718px;top:25px;width:4px;height:1px;background:#000"></div>
<div style="left:725px;top:0px;width:65px;height:18px;background:#d4d0c8;border-top:1px solid #fff;border-left:1px solid #fff;border-right:1px solid #404040;border-bottom:1px solid #404040;box-shadow:inset -1px -1px 0 #808080"></div>
<div class="t" style="left:725px;top:3px;width:65px;height:13px;overflow:hidden"><div class="t" style="top:0;right:10px;text-align:right">Basket</div></div>
<div style="left:789px;top:18px;width:1px;height:15px;background:#e8e6e0"></div>
<div style="left:783px;top:25px;width:4px;height:1px;background:#000"></div>
<div style="left:790px;top:0px;width:65px;height:18px;background:#d4d0c8;border-top:1px solid #fff;border-left:1px solid #fff;border-right:1px solid #404040;border-bottom:1px solid #404040;box-shadow:inset -1px -1px 0 #808080"></div>
<div class="t" style="left:790px;top:3px;width:65px;height:13px;overflow:hidden"><div class="t" style="top:0;left:2px">Updated</div></div>
<div style="left:854px;top:18px;width:1px;height:15px;background:#e8e6e0"></div>
<div style="left:792px;top:25px;width:4px;height:1px;background:#000"></div>
<div style="left:855px;top:0px;width:85px;height:18px;background:#d4d0c8;border-top:1px solid #fff;border-left:1px solid #fff;border-right:1px solid #404040;border-bottom:1px solid #404040;box-shadow:inset -1px -1px 0 #808080"></div>
<div class="t" style="left:855px;top:3px;width:85px;height:13px;overflow:hidden"><div class="t" style="top:0;left:2px">Carrier</div></div>
<div style="left:939px;top:18px;width:1px;height:15px;background:#e8e6e0"></div>
<div style="left:940px;top:0px;width:45px;height:18px;background:#d4d0c8;border-top:1px solid #fff;border-left:1px solid #fff;border-right:1px solid #404040;border-bottom:1px solid #404040;box-shadow:inset -1px -1px 0 #808080"></div>
<div class="t" style="left:940px;top:3px;width:45px;height:13px;overflow:hidden"><div class="t" style="top:0;left:2px">Cabin</div></div>
<div style="left:984px;top:18px;width:1px;height:15px;background:#e8e6e0"></div>
<div style="left:942px;top:25px;width:4px;height:1px;background:#000"></div>
<div style="left:0px;top:32px;width:983px;height:1px;background:#e2dfd6"></div>
<div style="left:0px;top:33px;width:983px;height:15px;background:#0a246a"></div>
<div class="t" style="left:0px;top:34px;width:30px;height:13px;overflow:hidden;color:#fff"><div class="t" style="top:0;right:3px;text-align:right">0</div></div>
<div class="t" style="left:30px;top:34px;width:40px;height:13px;overflow:hidden;color:#fff"><div class="t" style="top:0;right:3px;text-align:right">0</div></div>
<div class="t" style="left:70px;top:34px;width:40px;height:13px;overflow:hidden;color:#fff"><div class="t" style="top:0;right:3px;text-align:right">0</div></div>
<div class="t" style="left:110px;top:34px;width:45px;height:13px;overflow:hidden;color:#fff"><div class="t" style="top:0;left:2px">OW</div></div>
<div class="t" style="left:155px;top:34px;width:45px;height:13px;overflow:hidden;color:#fff"><div class="t" style="top:0;left:2px">MCO</div></div>
<div class="t" style="left:200px;top:34px;width:45px;height:13px;overflow:hidden;color:#fff"><div class="t" style="top:0;left:2px">LGW</div></div>
<div class="t" style="left:245px;top:34px;width:35px;height:13px;overflow:hidden;color:#fff"><div class="t" style="top:0;left:2px">Mon</div></div>
<div class="t" style="left:280px;top:34px;width:65px;height:13px;overflow:hidden;color:#fff"><div class="t" style="top:0;left:2px">16/07/2018</div></div>
<div class="t" style="left:345px;top:34px;width:40px;height:13px;overflow:hidden;color:#fff"><div class="t" style="top:0;left:2px">19:30</div></div>
<div class="t" style="left:385px;top:34px;width:35px;height:13px;overflow:hidden;color:#fff"><div class="t" style="top:0;left:2px">Tue</div></div>
<div class="t" style="left:530px;top:34px;width:65px;height:13px;overflow:hidden;color:#fff"><div class="t" style="top:0;right:3px;text-align:right">600.00</div></div>
<div class="t" style="left:595px;top:34px;width:65px;height:13px;overflow:hidden;color:#fff"><div class="t" style="top:0;right:3px;text-align:right">480.00</div></div>
<div class="t" style="left:660px;top:34px;width:65px;height:13px;overflow:hidden;color:#fff"><div class="t" style="top:0;right:3px;text-align:right">1,740.00</div></div>
<div class="t" style="left:725px;top:34px;width:65px;height:13px;overflow:hidden;color:#fff"><div class="t" style="top:0;right:3px;text-align:right">3,480.00</div></div>
<div class="t" style="left:790px;top:34px;width:65px;height:13px;overflow:hidden;color:#fff"><div class="t" style="top:0;left:2px">04/05/2017</div></div>
<div class="t" style="left:855px;top:34px;width:85px;height:13px;overflow:hidden;color:#fff"><div class="t" style="top:0;left:2px">Virgin Atlantic...</div></div>
<div class="t" style="left:940px;top:34px;width:45px;height:13px;overflow:hidden;color:#fff"><div class="t" style="top:0;left:2px">Y</div></div>
</div>
<div style="left:10px;top:644px;width:986px;height:15px;background-color:#ffffff;background-image:linear-gradient(45deg,#d4d0c8 25%,transparent 25%,transparent 75%,#d4d0c8 75%),linear-gradient(45deg,#d4d0c8 25%,transparent 25%,transparent 75%,#d4d0c8 75%);background-size:2px 2px;background-position:0 0,1px 1px"></div>
<div style="left:10px;top:644px;width:16px;height:15px;background:#d4d0c8;border-top:1px solid #d4d0c8;border-left:1px solid #d4d0c8;border-right:1px solid #404040;border-bottom:1px solid #404040;box-shadow:inset 1px 1px 0 #fff,inset -1px -1px 0 #808080"></div>
<svg style="left:15px;top:648px" width="5" height="8"><path d="M4 0 L4 7 L0.5 3.5 Z" fill="#000"/></svg>
<div style="left:26px;top:644px;width:625px;height:15px;background:#d4d0c8;border-top:1px solid #d4d0c8;border-left:1px solid #d4d0c8;border-right:1px solid #404040;border-bottom:1px solid #404040;box-shadow:inset 1px 1px 0 #fff,inset -1px -1px 0 #808080"></div>
<div style="left:979px;top:644px;width:16px;height:15px;background:#d4d0c8;border-top:1px solid #d4d0c8;border-left:1px solid #d4d0c8;border-right:1px solid #404040;border-bottom:1px solid #404040;box-shadow:inset 1px 1px 0 #fff,inset -1px -1px 0 #808080"></div>
<svg style="left:985px;top:648px" width="5" height="8"><path d="M0 0 L0 7 L3.5 3.5 Z" fill="#000"/></svg>
<svg style="left:751px;top:125px" width="8" height="5"><path d="M0 0 L7 0 L3.5 4 Z" fill="#808080"/></svg>
<svg style="left:791px;top:410px" width="8" height="5"><path d="M0 0 L7 0 L3.5 4 Z" fill="#808080"/></svg>
<div class="t" style="left:13px;top:681px;">First portion: 4.6 sec, total search time: 10.3 sec</div>
<div style="left:257px;top:678px;width:162px;height:18px;border-top:1px solid #808080;border-left:1px solid #808080;border-right:1px solid #fff;border-bottom:1px solid #fff;background:#d4d0c8"></div>
<div style="left:348px;top:680px;width:39px;height:14px;background:#0a246a"></div>
<div style="left:967px;top:676px;width:23px;height:22px;background:#d4d0c8;border-top:1px solid #fff;border-left:1px solid #fff;border-right:1px solid #404040;border-bottom:1px solid #404040;box-shadow:inset -1px -1px 0 #808080"></div>
<div style="left:967px;top:676px;width:23px;height:22px;text-align:center;font-family:'Liberation Serif',serif;font-weight:bold;font-size:17px;line-height:21px;color:#0050a0">i</div>
<div style="left:6px;top:703px;width:994px;height:1px;background:#808080"></div>
<div style="left:6px;top:704px;width:53px;height:17px;background:#d4d0c8;border-right:1px solid #808080;"></div>
<div class="t" style="left:9px;top:706px;color:#000;letter-spacing:-0.4px">Summary</div>
<div style="left:59px;top:704px;width:41px;height:17px;background:#d4d0c8;border-right:1px solid #808080;"></div>
<div class="t" style="left:61px;top:706px;color:#000;letter-spacing:-0.2px">Search</div>
<div style="left:100px;top:704px;width:124px;height:17px;background:#108010;border-right:1px solid #808080;border-right:none;border-radius:0 0 3px 3px;top:703px;height:18px"></div>
<div class="t" style="left:102px;top:706px;color:#fff;letter-spacing:-0.4px">Flt 5A,1C LON MCO LON</div>
<div style="left:224px;top:704px;width:84px;height:17px;background:#ccffcc;border-right:1px solid #808080;"></div>
<div class="t" style="left:227px;top:706px;color:#000;letter-spacing:-0.3px">Acc 5A,1C MCO</div>
<div style="left:308px;top:704px;width:51px;height:17px;background:#ccffcc;border-right:1px solid #808080;"></div>
<div class="t" style="left:311px;top:706px;color:#000;letter-spacing:-0.5px">Car MCO</div>
<div style="left:359px;top:704px;width:63px;height:17px;background:#ccffcc;border-right:1px solid #808080;"></div>
<div class="t" style="left:362px;top:706px;color:#000;letter-spacing:0px">Tour 5A,1C</div>
<div style="left:422px;top:704px;width:96px;height:17px;background:#d4d0c8;border-right:1px solid #808080;"></div>
<div class="t" style="left:425px;top:706px;color:#000;letter-spacing:-0.33px">Financial Summary</div>
<div class="t" style="left:332px;top:730px;">User: 428 - Danny Eden</div>
<div class="t" style="left:458px;top:730px;">Retailer: 'Ocean-Florida'</div>
<div class="t" style="left:584px;top:730px;">Client: none</div>
<div class="t" style="left:947px;top:730px;letter-spacing:-0.35px">11:38 GMT</div>
</body></html>
